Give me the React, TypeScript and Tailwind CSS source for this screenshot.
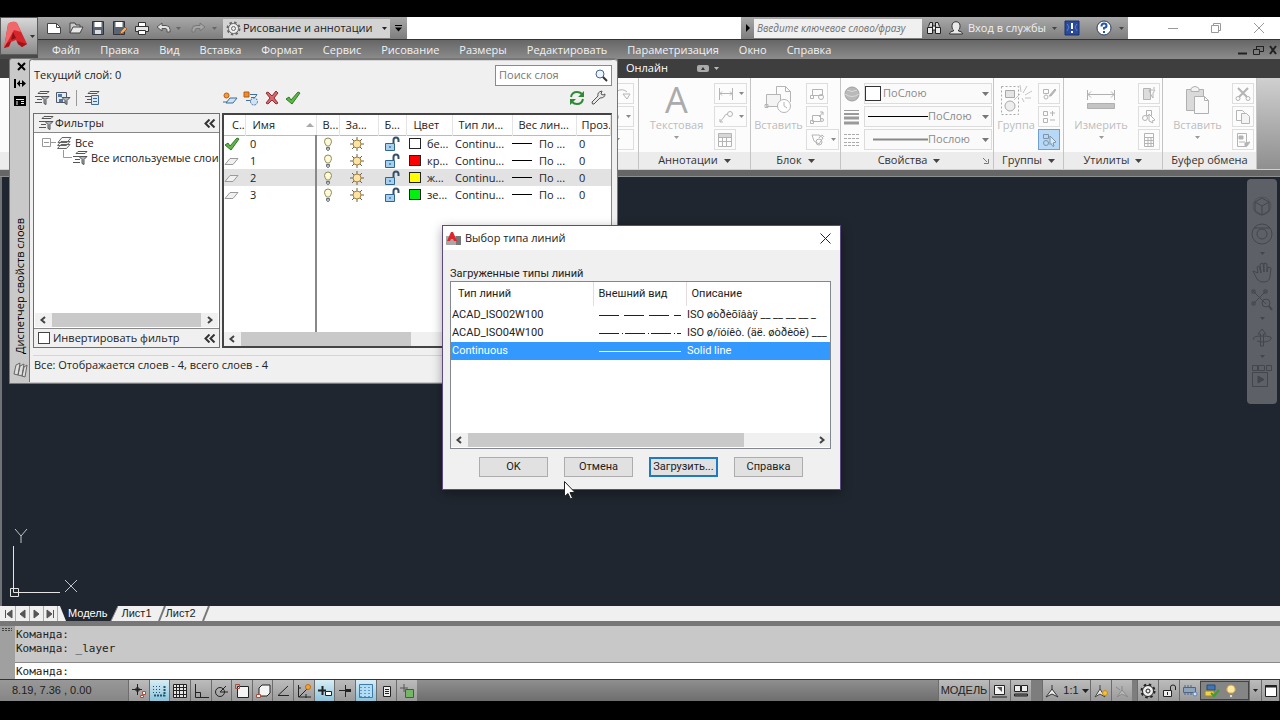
import type { ReactNode } from "react";
import clsx from "clsx";

const MENU = [
  "Файл", "Правка", "Вид", "Вставка", "Формат", "Сервис", "Рисование",
  "Размеры", "Редактировать", "Параметризация", "Окно", "Справка",
];

const LAYERS = [
  { name: "0", current: true, fill: "bg-white", color: "бе..." },
  { name: "1", fill: "bg-[#ff0000]", color: "кр..." },
  { name: "2", selected: true, fill: "bg-[#ffff00]", color: "ж..." },
  { name: "3", fill: "bg-[#00f010]", color: "зе..." },
];

const LINETYPES = [
  { name: "ACAD_ISO02W100", dash: "20 5", note: "ISO øòðèõîâàÿ __ __ __ __ _" },
  { name: "ACAD_ISO04W100", dash: "20 3 1 2", note: "ISO ø/ïóíêò. (äë. øòðèõè) ___" },
  { name: "Continuous", dash: "", note: "Solid line", selected: true },
];

type DrawingProps = { w?: number; h?: number; className?: string; children: ReactNode };

function Drawing({ w = 16, h = 16, className, children }: DrawingProps) {
  return (
    <svg
      width={w}
      height={h}
      viewBox={`0 0 ${w} ${h}`}
      fill="none"
      stroke="currentColor"
      aria-hidden="true"
      className={clsx("shrink-0", className)}
    >
      {children}
    </svg>
  );
}

function Caret({ className }: { className?: string }) {
  return (
    <Drawing w={7} h={4} className={className}>
      <path d="M0 0h7L3.5 4z" fill="currentColor" stroke="none" />
    </Drawing>
  );
}

function SmallCaret({ className }: { className?: string }) {
  return (
    <Drawing w={5} h={3} className={className}>
      <path d="M0 0h5L2.500 3z" fill="currentColor" stroke="none" />
    </Drawing>
  );
}

/* ---------- title bar ---------- */

function AppButton() {
  return (
    <button
      aria-label="Меню приложения"
      className="flex h-[38px] w-[38px] shrink-0 items-center gap-px border border-[#5a5a5a] bg-gradient-to-b from-[#d8d8d8] to-[#8b8b8b] pl-[2px] text-[#333]"
    >
      <Drawing w={26} h={34}>
        <path d="M5 5q5-4 9-1l10 21-5 3-4-3-2-4-5 2-2 5-5 1z" fill="#d5262c" stroke="none" />
        <path d="M5 5q5-4 9-1l4 9-7-2-5 9-5 9z" fill="#f0686a" stroke="none" />
        <path d="m10 13 3 6-5 2z" fill="#8d1217" stroke="none" />
        <path d="M1 29 6 27l2-5-4 2zM14 22l10 3-5 3-4-3z" fill="#a3141a" stroke="none" />
      </Drawing>
      <SmallCaret />
    </button>
  );
}

function QuickAccess() {
  return (
    <div className="flex h-full w-[369px] shrink-0 items-center bg-gradient-to-b from-[#a9a9a9] to-[#7d7d7d] pl-2 text-[#333]">
      <div className="flex items-center gap-[6px]">
        <button aria-label="Создать">
          <Drawing><path d="M1.500 3.500h9l4 4v6h-13z" fill="#fff" stroke="#444" /><path d="M10.500 3.500v4h4" stroke="#444" /></Drawing>
        </button>
        <button aria-label="Открыть">
          <Drawing><path d="M2 13V3h5l1 2h4v2" fill="#ccc" stroke="#444" /><path d="m2 13 3-6h10l-3 6z" fill="#e8e8e8" stroke="#444" /></Drawing>
        </button>
        <button aria-label="Сохранить">
          <Drawing><path d="M2.500 1.500h11v13h-11z" fill="#5b6472" stroke="#2d3440" /><path d="M4.500 2h7v5h-7z" fill="#fff" stroke="none" /><path d="M5 10h6v4H5z" fill="#ddd" stroke="none" /></Drawing>
        </button>
        <button aria-label="Сохранить как">
          <Drawing><path d="M1.500 1.500h11v13h-11z" fill="#5b6472" stroke="#2d3440" /><path d="M3.500 2h7v5h-7z" fill="#fff" stroke="none" /><path d="m8 14 1-3 4-4 2 2-4 4z" fill="#e8b070" stroke="#a45a20" /></Drawing>
        </button>
        <button aria-label="Печать">
          <Drawing><path d="M4.500 6V2.500h7V6" fill="#fff" stroke="#333" /><path d="M1.500 6.500h13v5h-13z" fill="#e5e5e5" stroke="#333" /><path d="M4.500 10.500h7v4h-7z" fill="#fff" stroke="#333" /></Drawing>
        </button>
        <button aria-label="Отменить">
          <Drawing><path d="m1 7 5-4v2.500h4q4 0 4 4V12h-3v-2q0-1.500-2-1.500H6V11z" fill="#e4e4e4" stroke="#555" /></Drawing>
        </button>
      </div>
      <SmallCaret className="mx-1 text-[#666]" />
      <button aria-label="Повторить" className="ml-[5px]">
        <Drawing><path d="m15 7-5-4v2.500H6q-4 0-4 4V12h3v-2q0-1.500 2-1.500h3V11z" fill="#a5a5a5" stroke="#777" /></Drawing>
      </button>
      <SmallCaret className="mx-[6px] text-[#666]" />
      <div className="flex h-[19px] w-[167px] items-center bg-[#d3d3d3] pl-[3px] text-[#222]">
        <Drawing w={15} h={15}>
          <circle cx="7.500" cy="7.500" r="6" stroke="#666" strokeWidth="2" strokeDasharray="2.400 2.300" />
          <circle cx="7.500" cy="7.500" r="5" stroke="#666" fill="#eee" />
          <circle cx="7.500" cy="7.500" r="2" stroke="#666" />
        </Drawing>
        <select aria-label="Рабочее пространство" className="min-w-0 flex-1 appearance-none bg-transparent pl-[2px] text-[11px] outline-none">
          <option>Рисование и аннотации</option>
        </select>
        <SmallCaret className="mr-[3px]" />
      </div>
      <button aria-label="Настройка панели" className="ml-[5px] text-black">
        <Drawing w={7} h={7}><path d="M0 .5h7" /><path d="M0 2.500h7L3.500 6.500z" fill="currentColor" stroke="none" /></Drawing>
      </button>
    </div>
  );
}

function InfoCenter() {
  return (
    <div className="flex h-full w-[387px] shrink-0 items-center bg-gradient-to-b from-[#a9a9a9] to-[#7d7d7d]">
      <button aria-label="Свернуть поиск" className="flex w-[13px] justify-center text-black">
        <Drawing w={4} h={8}><path d="M0 0v8l4-4z" fill="currentColor" stroke="none" /></Drawing>
      </button>
      <input
        aria-label="Поиск по справке"
        placeholder="Введите ключевое слово/фразу"
        className="h-[19px] w-[168px] bg-[#f0f0f0] px-[3px] text-[10px] italic outline-none placeholder:text-[#6f6f6f]"
      />
      <button aria-label="Найти" className="ml-1">
        <Drawing>
          <path d="M2.500 6.500 4 2.500h2.500v4m3 0v-4H12l1.500 4" fill="#ddd" stroke="#222" />
          <path d="M1.500 7.500h5v6h-5zm8 0h5v6h-5zM6.500 6h3v4h-3z" fill="#eee" stroke="#222" />
        </Drawing>
      </button>
      <button className="ml-[6px] flex items-center gap-1 text-[11px] text-[#f0f0f0]">
        <Drawing><path d="M1.500 14c0-2 2-2.500 4-3v-1C4 9 4 7.500 4 5.500c0-5 8-5 8 0 0 2 0 3.500-1.500 4.500v1c2 .5 4 1 4 3z" fill="#eaeaea" stroke="#333" /></Drawing>
        <span>Вход в службы</span>
      </button>
      <SmallCaret className="ml-[6px] text-[#444]" />
      <button aria-label="Exchange" className="ml-[7px]">
        <Drawing><path d="M1 1h14v14H1z" fill="#2b4a9b" stroke="#18306e" /><path d="M8 3v6m0 2v2" stroke="#fff" strokeWidth="2" /><path d="m3 4 2 3-2 4m10-7-2 3 2 4" stroke="#5f7fc8" /></Drawing>
      </button>
      <button aria-label="Справка AutoCAD" className="ml-[16px]">
        <Drawing><circle cx="8" cy="8" r="7" fill="#fff" stroke="#2b3b66" /><path d="M5.500 6.500q0-3 2.500-3t2.500 2.200Q10.500 7.500 8 8v1.500M8 11v2" stroke="#2456ad" strokeWidth="2" /></Drawing>
      </button>
      <SmallCaret className="ml-[7px] text-[#444]" />
    </div>
  );
}

function Header() {
  return (
    <header className="flex h-[42px] bg-[#4a4a4a]">
      <AppButton />
      <div className="flex min-w-0 flex-1 flex-col">
        <div className="flex h-[22px] bg-white">
          <QuickAccess />
          <div className="flex-1" />
          <InfoCenter />
          <div className="flex w-[152px] shrink-0 items-center justify-end gap-[33px] pr-[16px] text-[#999]">
            <button aria-label="Свернуть"><Drawing w={10} h={10}><path d="M0 5.500h10" /></Drawing></button>
            <button aria-label="Развернуть"><Drawing w={10} h={10}><path d="M.5 2.500h7v7h-7zM2.500 2V.5h7v7H8" /></Drawing></button>
            <button aria-label="Закрыть"><Drawing w={10} h={10}><path d="m0 0 10 10M10 0 0 10" /></Drawing></button>
          </div>
        </div>
        <div className="flex flex-1 items-center border-t border-[#333] bg-gradient-to-b from-[#666] to-[#8c8c8c] pl-[14px]">
          <nav className="flex gap-[20px] text-[11px] leading-4 text-[#f2f2f2]">
            {MENU.map((item) => (
              <a key={item} href="#" className="whitespace-nowrap">{item}</a>
            ))}
          </nav>
          <div className="ml-auto flex items-center gap-[5px] pr-[3px] text-[#222]">
            <Drawing w={10} h={10}><path d="M0 8.500h9" strokeWidth="2" /></Drawing>
            <Drawing w={11} h={10}><path d="M.5 4.500h6v5h-6zM3.500 4V1.500h7v5H7M3 1.500h8" /></Drawing>
            <Drawing w={8} h={10}><path d="m1 1 6 8m0-8L1 9" strokeWidth="2" /></Drawing>
          </div>
        </div>
      </div>
    </header>
  );
}

/* ---------- ribbon ---------- */

type PanelProps = { title: string; className: string; arrow?: boolean; launcher?: boolean; children: ReactNode };

function Panel({ title, className, arrow = true, launcher, children }: PanelProps) {
  return (
    <section className={clsx("flex shrink-0 flex-col border-r border-[#c4c4c4]", className)}>
      <div className="flex flex-1 bg-[#fcfcfc] pt-[5px]">{children}</div>
      <h2 className="flex h-[17px] items-center justify-center gap-[6px] bg-[#ececec] text-[11px] text-[#333]">
        <span className={clsx(launcher && "ml-auto")}>{title}</span>
        {arrow && <Caret className="text-[#444]" />}
        {launcher && (
          <Drawing w={6} h={6} className="ml-auto mr-1 text-[#777]"><path d="m0 0 4 4M5.500 1v4.500H1" /></Drawing>
        )}
      </h2>
    </section>
  );
}

function Tool({ label, active, wide, children }: { label: string; active?: boolean; wide?: boolean; children: ReactNode }) {
  return (
    <button
      aria-label={label}
      className={clsx(
        "flex h-[21px] items-center justify-center border",
        wide ? "w-[33px] gap-[5px]" : "w-[22px]",
        active ? "border-[#6fa0d0] bg-[#b7d8f7] text-[#7d93a8]" : "border-[#dedede] text-[#b4b4b4]",
      )}
    >
      {children}
      {wide && <SmallCaret className="text-[#888]" />}
    </button>
  );
}

function BigTool({ label, caret, className, children }: { label: string; caret?: boolean; className: string; children: ReactNode }) {
  return (
    <button className={clsx("flex flex-col items-center text-[11px] text-[#bcbcbc]", className)}>
      <span className="flex h-[34px] items-center">{children}</span>
      <span className="leading-4">{label}</span>
      {caret && <SmallCaret className="mt-[3px] text-[#999]" />}
    </button>
  );
}

function PropertyRow({ icon, sample, value, label }: { icon: ReactNode; sample: ReactNode; value: string; label: string }) {
  return (
    <div className="flex h-[21px] items-center gap-1">
      {icon}
      <label className="flex h-[21px] w-[128px] items-center border border-[#dcdcdc] bg-[#fafafa]">
        {sample}
        <select aria-label={label} className="min-w-0 flex-1 appearance-none bg-transparent text-[11px] text-[#8a8a8a] outline-none">
          <option>{value}</option>
        </select>
        <Caret className="mr-[2px] text-[#777]" />
      </label>
    </div>
  );
}

function Ribbon() {
  return (
    <div className="bg-[#3e3e3e]">
      <div className="flex h-[19px] items-center pl-[626px] text-[11px] text-white">
        <button>Онлайн</button>
        <button aria-label="Свернуть ленту" className="ml-[29px] flex items-center gap-[5px] text-[#bbb]">
          <Drawing w={12} h={8}><rect width="12" height="7" rx="2" fill="#aaa" stroke="none" /><path d="M4 5h4L6 2z" fill="#333" stroke="none" /></Drawing>
          <SmallCaret />
        </button>
      </div>
      <div className="flex h-[92px] border-b border-[#d0d0d0] bg-gradient-to-b from-[#d0d0d0] to-[#8f8f8f]">
        <section className="flex w-[639px] shrink-0 flex-col border-r border-[#c4c4c4]">
          <div className="flex flex-1 flex-col items-end gap-[2px] bg-[#fcfcfc] pr-[4px] pt-[5px]">
            <Tool label="Дуга"><Drawing><path d="M2 5q6-3 10 1m-4 2h7l-3 5z" /></Drawing></Tool>
            <Tool label="Круг" wide><Drawing><circle cx="11" cy="8" r="2.500" /></Drawing></Tool>
            <Tool label="Массив" wide>{null}</Tool>
          </div>
          <div className="h-[17px] bg-[#ececec]" />
        </section>

        <Panel title="Аннотации" className="w-[112px]">
          <BigTool label="Текстовая" caret className="w-[75px]">
            <span className="text-[36px] leading-[34px] text-[#ababab]">A</span>
          </BigTool>
          <div className="flex flex-col gap-[2px]">
            <Tool label="Размер" wide><Drawing><path d="M1.500 2v12m13-12v12M2 7.500h12m-10-2-2 2 2 2m8-4 2 2-2 2" /></Drawing></Tool>
            <Tool label="Выноска" wide><Drawing><circle cx="12" cy="5" r="2.500" /><path d="M9.500 5Q7 5 6 8l-4 5m0-3v3h3" /></Drawing></Tool>
            <Tool label="Таблица"><Drawing><path d="M1.500 1.500h13v13h-13zM1.500 5.500h13m-13 4h13m-9-4v9m4-9v9" /><path d="M2 2h12v3H2z" fill="currentColor" opacity=".5" /></Drawing></Tool>
          </div>
        </Panel>

        <Panel title="Блок" className="w-[90px]">
          <BigTool label="Вставить" className="w-[55px]">
            <Drawing w={30} h={30} className="text-[#b5b5b5]">
              <path d="M12.500 12V1.500h9l5 5V17M21.500 1.500v5h5" />
              <path d="M2.500 9.500h14v12h-14z" fill="#f4f4f4" />
              <circle cx="20" cy="21" r="6.500" fill="#fff" /><path d="M20 17v4l3 2M1 19.500h3v3H1z" />
            </Drawing>
          </BigTool>
          <div className="flex flex-col gap-[2px]">
            <Tool label="Создать блок"><Drawing><path d="M3.500 3.500h10v6h-10zM1.500 9.500h3v3h-3z" /><circle cx="12" cy="11" r="2.500" /></Drawing></Tool>
            <Tool label="Редактор блоков"><Drawing><path d="M3.500 6.500h8v6h-8zM1.500 11.500h3v3h-3zM10 8l4-5m-3 0h3v3" /><circle cx="13" cy="11" r="1.500" /></Drawing></Tool>
            <Tool label="Атрибуты" wide><Drawing><path d="M2 3h7l4 3-4 6-5-3zM9 6q3-5 5-1" /><circle cx="9" cy="10" r="3" /></Drawing></Tool>
          </div>
        </Panel>

        <Panel title="Свойства" className="w-[153px]" launcher>
          <div className="flex flex-col gap-[2px] pl-[3px]">
            <PropertyRow
              label="Цвет объекта"
              value="ПоСлою"
              icon={<Drawing><circle cx="8" cy="8" r="7" fill="#b9b9b9" stroke="#a0a0a0" /><path d="M1 8q7 5 14 0M3 4q5 3 10 0" stroke="#dadada" /></Drawing>}
              sample={<span className="mr-[2px] h-[15px] w-[16px] shrink-0 border border-[#333] bg-white" />}
            />
            <PropertyRow
              label="Вес линий"
              value="ПоСлою"
              icon={<Drawing className="text-[#9a9a9a]"><path d="M0 1.500h15" /><path d="M0 5h15" strokeWidth="2" /><path d="M0 9h15M0 14h15" strokeWidth="3" /></Drawing>}
              sample={<Drawing w={63} h={3} className="text-black"><path d="M3 1.500h60" /></Drawing>}
            />
            <PropertyRow
              label="Тип линий"
              value="Послою"
              icon={<Drawing className="text-[#aaa]"><path d="M0 2.500h15M0 6.500h15M0 10.500h15M0 13.500h15" strokeDasharray="3 1" /></Drawing>}
              sample={<Drawing w={63} h={3} className="text-[#888]"><path d="M8 1.500h55" strokeWidth="2" /></Drawing>}
            />
          </div>
        </Panel>

        <Panel title="Группы" className="w-[70px]">
          <BigTool label="Группа" className="w-[44px]">
            <Drawing w={32} h={32} className="text-[#a9a9a9]">
              <path d="M1.500 2.500h17v28h-17z" strokeDasharray="2 2" />
              <path d="M5.500 6.500h9v7h-9z" fill="#e4e4e4" /><circle cx="10" cy="22" r="5" fill="#eee" />
              <path d="m14 16 6-6M20 1l1 7m6-6-4 7m9-2-7 4m6 3h-6m-3 0 2 4" stroke="#c4c4c4" />
            </Drawing>
          </BigTool>
          <div className="flex flex-col gap-[2px]">
            <Tool label="Редактировать группу"><Drawing><path d="M2.500 3.500h5v4h-5z" /><circle cx="5" cy="11" r="2" /><path d="m8 10 6-7 1 1-5 6z" fill="currentColor" /></Drawing></Tool>
            <Tool label="Добавить в группу"><Drawing><path d="M2.500 2.500h4v4h-4zM2.500 9.500h4v4h-4zM9 4h5m-2.500-2v5M9 11h5" /></Drawing></Tool>
            <Tool label="Выбор группы" active><Drawing><path d="M2.500 2.500h5v4h-5z" /><circle cx="5" cy="11" r="2.500" /><path d="m9 4 6 6-3 1 1 3-1 .5-2-3-1 1z" fill="#d9ebfb" /></Drawing></Tool>
          </div>
        </Panel>

        <Panel title="Утилиты" className="w-[99px]">
          <BigTool label="Измерить" caret className="w-[74px]">
            <Drawing w={28} h={22} className="text-[#b0b0b0]">
              <path d="M.5 1v10m27-10v10M1 5.500h26m-23-3-3 3 3 3m20-6 3 3-3 3" />
              <path d="M.5 14.500h27v5H.5z" fill="#c4c4c4" />
            </Drawing>
          </BigTool>
          <div className="flex flex-col gap-[2px]">
            <Tool label="Быстрый выбор"><Drawing><path d="M2.500 2.500h7v11h-7z" fill="#ddd" /><path d="M8 4h6l-2 3v5l-2-3zM13 1v2" /></Drawing></Tool>
            <Tool label="Выбрать подобные"><Drawing><path d="M5.500 1.500h5v5h-5z" /><circle cx="4" cy="9" r="2.500" /><path d="m8 5 6 6-3 1 1 2-4-2z" fill="#fff" /></Drawing></Tool>
            <Tool label="Калькулятор"><Drawing><path d="M3.500 1.500h9v13h-9zM4 5.500h8M4 8.500h8m-8 3h8m-5-6v9m3-9v9" /></Drawing></Tool>
          </div>
        </Panel>

        <Panel title="Буфер обмена" className="w-[94px]" arrow={false}>
          <BigTool label="Вставить" caret className="w-[69px]">
            <Drawing w={26} h={30} className="text-[#b0b0b0]">
              <path d="M1.500 4.500h17v21h-17z" fill="#dadada" /><path d="M6 3.500q4-4 8 0v3H6z" fill="#f3f3f3" />
              <path d="M9.500 11.500h10l4 4v13h-14zM19.500 11.500v4h4" fill="#fafafa" />
            </Drawing>
          </BigTool>
          <div className="flex flex-col gap-[2px]">
            <Tool label="Вырезать"><Drawing><path d="m3 2 9 9M13 2l-9 9" strokeWidth="2" /><circle cx="3" cy="12.500" r="2" /><circle cx="13" cy="12.500" r="2" /></Drawing></Tool>
            <Tool label="Копировать"><Drawing><path d="M1.500 1.500h6l2 2v8h-8z" /><path d="M6.500 4.500h5l3 3v7h-8z" fill="#f4f4f4" /></Drawing></Tool>
            <Tool label="Копировать свойства"><Drawing><path d="M2.500 1.500h9v13h-9z" /><path d="M4 4h4v3H4zM4 10h6m0 1 5-1-3 4h-2z" fill="currentColor" /></Drawing></Tool>
          </div>
        </Panel>
      </div>
      <div className="h-[7px] border-b border-[#8d908e] bg-[#666]" />
    </div>
  );
}

/* ---------- drawing area ---------- */

function NavigationBar() {
  return (
    <div className="absolute right-[3px] top-[2px] flex h-[225px] w-[30px] flex-col items-center justify-between rounded-[4px] bg-[#5d6067] pb-[16px] pt-[16px] text-[#42464d]">
      <Drawing w={22} h={22}><circle cx="11" cy="11" r="9" opacity=".5" /><path d="m4 7 7-4 7 4v9l-7 4-7-4zM4 7l7 4 7-4m-7 4v9" /></Drawing>
      <Drawing w={22} h={22}><circle cx="11" cy="11" r="10" /><circle cx="11" cy="11" r="5" /><path d="M3 5h16" /></Drawing>
      <SmallCaret />
      <Drawing w={22} h={22}><path d="m7 12-5-2 4 8q3 4 8 3 5-1 5-6l1-8-3-1-1 5V3l-3-1v9l-1-9-3 1 1 9-2-7-2 1z" /></Drawing>
      <Drawing w={22} h={22}><path d="M2 2 15 15M15 2 2 15M1 1h3v3H1zm12 0h3v3h-3zM1 13h3v3H1z" /><circle cx="15" cy="14" r="4" /><path d="m18 17 3 4" strokeWidth="2" /></Drawing>
      <SmallCaret />
      <Drawing w={22} h={22}><path d="M9.500 19V7L7 7l4-5 4 5h-2.500v12z" /><path d="M3 13q-3-4 8-4t9 3-9 3l-5-1" /></Drawing>
      <SmallCaret />
      <Drawing w={22} h={24}><path d="M1.500 1.500h5v5h-5zm6 0h6v5h-6zm8 0h5v5h-5zM1.500 8.500h15v14h-15z" /><path d="M7 12v7l6-3.500z" fill="currentColor" /></Drawing>
    </div>
  );
}

function DrawingArea() {
  return (
    <main className="relative h-[429px] border-l-2 border-[#6f7376] bg-[#20262f]">
      <NavigationBar />
      <Drawing w={80} h={80} className="absolute bottom-[4px] left-[6px] text-[#e4e4e4]">
        <path d="M5.500 24v44M10 70.500h42M2.500 66.500h8v8h-8zM5.500 68v2.500H10" />
        <path d="M7 7l6 7 6-7m-6 7v7M57 58l12 12m0-12-12 12" stroke="#c0c4c8" />
      </Drawing>
    </main>
  );
}

/* ---------- layer palette ---------- */

function ScrollBar({ thumb }: { thumb: string }) {
  return (
    <div aria-hidden="true" className="flex h-[14px] items-center bg-[#f0f0f0] text-[#444]">
      <Drawing w={17} h={8}><path d="m10 1-3.500 3L10 7" strokeWidth="2" /></Drawing>
      <div className="flex h-full flex-1"><div className={clsx("h-full bg-[#c9c9c9]", thumb)} /></div>
      <Drawing w={17} h={8}><path d="m7 1 3.500 3L7 7" strokeWidth="2" /></Drawing>
    </div>
  );
}

function Collapse() {
  return (
    <button aria-label="Свернуть" className="ml-auto text-[#333]">
      <Drawing w={12} h={9}><path d="M5.500.5 1.500 4.500l4 4m5-8-4 4 4 4" strokeWidth="2" /></Drawing>
    </button>
  );
}

function FilterIcon() {
  return (
    <Drawing className="text-[#555]">
      <path d="M4 3.500h9l2-2H6zM1 6.500h6M3 9.500h5M1 12.500h7" />
      <path d="M7 6.500h8l-3 3v5l-2-1v-4z" fill="#a9b2bb" />
    </Drawing>
  );
}

function StackIcon() {
  return (
    <Drawing className="text-[#666]">
      <path d="M1.500 13.500 5 9.500h9l-3.500 4zM1.500 10.500 5 6.500h9l-3.500 4zM2 7.500l4-5h9l-4 5z" fill="#f8f8f8" />
    </Drawing>
  );
}

function Check() {
  return <Drawing><path d="m1 9 3-2 2 3 7-8 2 1-8 11z" fill="#5fb548" stroke="#2e7a24" /></Drawing>;
}

function Bulb() {
  return (
    <Drawing w={10}>
      <path d="M3.500 10Q1.500 7 1.500 5.500q0-3.500 3.500-3.500t3.500 3.500Q8.500 7 6.500 10z" fill="#fdfbd6" stroke="#8b8a5c" />
      <path d="M3.500 11.500h3v2l-1 1h-1l-1-1z" fill="#b5b9c5" stroke="#6b7078" />
    </Drawing>
  );
}

function Sun() {
  return (
    <Drawing>
      <path d="M8 1v14M1 8h14M3 3l10 10M13 3 3 13" stroke="#6d624a" />
      <circle cx="8" cy="8" r="4" fill="#fbe3a6" stroke="#a5813d" />
    </Drawing>
  );
}

function Lock() {
  return (
    <Drawing>
      <path d="M9.500 7V4q0-2.500 2.500-2.500T14.500 4v2" stroke="#34506b" strokeWidth="2" />
      <path d="M1.500 7.500h9v7h-9z" fill="#a7d0ee" stroke="#2e6693" /><path d="M6 10v2" stroke="#1f4a70" />
    </Drawing>
  );
}

function FilterTree() {
  return (
    <div className="flex w-[187px] shrink-0 flex-col border border-[#6f6f6f]">
      <div className="flex h-[19px] items-center gap-px border-b border-[#888] pl-1 pr-[3px]">
        <FilterIcon />
        <span className="text-[11px]">Фильтры</span>
        <Collapse />
      </div>
      <div className="flex flex-1 flex-col overflow-hidden bg-white pt-[2px] text-[11px] leading-[15px]">
        <div className="flex h-[15px] items-center pl-[8px]">
          <Drawing w={14} h={9} className="text-[#999]"><path d="M.5.5h8v8h-8zM2 4.500h5m2 0h5" /></Drawing>
          <StackIcon />
          <span className="ml-[3px]">Все</span>
        </div>
        <div className="flex h-[15px] items-center whitespace-nowrap pl-[29px]">
          <Drawing w={9} h={15} className="text-[#999]"><path d="M.5 0v7.500H9" /></Drawing>
          <FilterIcon />
          <span className="ml-[3px]">Все используемые слои</span>
        </div>
        <div className="mt-auto px-px pb-px"><ScrollBar thumb="w-full" /></div>
      </div>
      <div className="flex h-[19px] items-center border-t border-[#888] pl-1 pr-[3px]">
        <label className="flex items-center gap-[3px] text-[11px]">
          <input type="checkbox" className="h-[12px] w-[12px] appearance-none border border-[#444] bg-white" />
          Инвертировать фильтр
        </label>
        <Collapse />
      </div>
    </div>
  );
}

function LayerTable() {
  return (
    <div className="flex min-w-0 flex-1 flex-col overflow-hidden border-2 border-r border-[#444] border-r-[#888] bg-white">
      <div className="h-[217px]">
        <table className="h-full w-full table-fixed border-collapse text-left text-[11px] leading-[16px]">
          <colgroup>
            <col className="w-[21px]" />
            <col className="w-[71px]" />
            <col className="w-[23px]" />
            <col className="w-[39px]" />
            <col className="w-[28px]" />
            <col className="w-[46px]" />
            <col className="w-[60px]" />
            <col className="w-[64px]" />
            <col />
          </colgroup>
          <thead>
            <tr className="h-[20px] whitespace-nowrap border-b border-[#bbb] [&>th]:overflow-hidden [&>th]:border-r [&>th]:border-[#e4e4e4] [&>th]:p-0 [&>th]:font-normal">
              <th><span className="pl-2">С..</span></th>
              <th>
                <span className="flex items-center justify-between pl-[7px] pr-[2px]">
                  Имя
                  <Drawing w={8} h={4} className="text-[#aaa]"><path d="M0 4h8L4 0z" fill="currentColor" stroke="none" /></Drawing>
                </span>
              </th>
              <th className="pl-[6px]!">В...</th>
              <th className="pl-[6px]!">За...</th>
              <th className="pl-[6px]!">Б...</th>
              <th className="pl-[7px]!">Цвет</th>
              <th className="pl-[6px]!">Тип ли...</th>
              <th className="pl-[6px]!">Вес лин...</th>
              <th className="pl-[5px]!">Проз.</th>
            </tr>
          </thead>
          <tbody>
            {LAYERS.map((layer) => (
              <tr
                key={layer.name}
                className={clsx("h-[17px] whitespace-nowrap [&>td]:overflow-hidden [&>td]:p-0", layer.selected && "bg-[#e2e2e2]")}
              >
                <td>
                  {layer.current ? (
                    <Check />
                  ) : (
                    <Drawing><path d="M1 11.500 6 5.500h8l-5 6z" fill="#f0f0f0" stroke="#9a9a9a" /></Drawing>
                  )}
                </td>
                <td className="border-r-2 border-[#888] pl-[5px]!">{layer.name}</td>
                <td className="pl-[6px]!"><Bulb /></td>
                <td className="pl-[10px]!"><Sun /></td>
                <td className="pl-[6px]!"><Lock /></td>
                <td className="pl-[3px]!">
                  <span className="flex items-center gap-[6px]">
                    <span className={clsx("h-[11px] w-[12px] shrink-0 border border-[#222]", layer.fill)} />
                    {layer.color}
                  </span>
                </td>
                <td className="pl-[3px]!">Continu...</td>
                <td>
                  <span className="flex items-center gap-[7px]">
                    <span className="h-px w-[20px] shrink-0 bg-black" />
                    По ...
                  </span>
                </td>
                <td className="pl-[3px]!">0</td>
              </tr>
            ))}
            {/* empty space below the last layer keeps the frozen-column divider */}
            <tr>
              <td />
              <td className="border-r-2 border-[#888]" />
              <td colSpan={7} />
            </tr>
          </tbody>
        </table>
      </div>
      <ScrollBar thumb="w-[170px]" />
    </div>
  );
}

function LayerPalette() {
  return (
    <section className="absolute left-[9px] top-[58px] flex h-[326px] w-[609px] rounded-t-[3px] border border-[#777] bg-[#c9c9c9] pb-px text-[#222]">
      <div className="flex w-[19px] shrink-0 flex-col items-center gap-[8px] pb-1 pt-[3px] text-black">
        <button aria-label="Закрыть палитру" className="ml-[3px]"><Drawing w={9} h={9}><path d="m1 1 7 7m0-7L1 8" strokeWidth="2" /></Drawing></button>
        <button aria-label="Автоматически скрывать"><Drawing w={12} h={9}><path d="M1 0v9" strokeWidth="2" /><path d="M6 1v7L3 4.500zM8 1v7l4-3.500z" fill="currentColor" stroke="none" /><path d="M3 4.500h8" /></Drawing></button>
        <button aria-label="Свойства палитры"><Drawing w={12} h={10}><path d="M0 0h12v10H0z" fill="currentColor" stroke="none" /><path d="M2 3.500h8M7 5.500h3m-3 2h3M3 5v4" stroke="#eee" /></Drawing></button>
        <span className="mt-auto rotate-180 whitespace-nowrap text-[11px] leading-4 [writing-mode:vertical-rl]">Диспетчер свойств слоев</span>
        <Drawing><path d="m2 12 2-9 4-2-2 12zM6 13l2-9 4-2-2 12zM10 14l2-9 3-2-2 12z" fill="#ddd" stroke="#666" /></Drawing>
      </div>

      <div className="flex min-w-0 flex-1 flex-col rounded-t-[3px] border-l border-t border-[#777] bg-[#f0f0f0] pl-[3px] pr-[5px]">
        <div className="flex h-[30px] items-center border-t border-[#d5d5d5] pl-px">
          <span className="text-[11px]">Текущий слой: 0</span>
          <label className="ml-auto flex h-[21px] w-[117px] items-center border border-[#8a8a8a] bg-white pr-[3px]">
            <input aria-label="Поиск слоя" placeholder="Поиск слоя" className="min-w-0 flex-1 bg-transparent pl-[3px] text-[11px] outline-none placeholder:text-[#777]" />
            <Drawing w={13} h={13}><circle cx="5" cy="5" r="4" stroke="#45688e" fill="#eef4fa" /><path d="m8 8 4 4" stroke="#333" strokeWidth="2" /></Drawing>
          </label>
        </div>
        <div className="flex h-[23px] shrink-0 items-start">
          <div className="flex w-[189px] items-center gap-[5px] pl-px">
            <button aria-label="Новый фильтр"><FilterIcon /></button>
            <button aria-label="Новый фильтр группы">
              <Drawing><path d="M1.500 2.500h10v10h-10z" fill="#e3ebf3" stroke="#556" /><path d="M3 4h4v3H3zM4 9h4v3H4z" fill="#4c78a8" stroke="none" /><path d="M7 7.500h8l-3 3v4l-2-1v-3z" fill="#a9b2bb" stroke="#555" /></Drawing>
            </button>
            <span className="h-[16px] w-px bg-[#999]" />
            <button aria-label="Диспетчер состояний слоев" className="ml-[2px]">
              <Drawing><path d="M4 3.500h9l2-2H6zM1 6.500h6M3 9.500h5M1 12.500h7" stroke="#555" /><path d="M7.500 5.500h7v9h-7z" fill="#dce9f5" stroke="#3f6a94" /><path d="M9 8.500h4m-4 3h4" stroke="#3f6a94" /></Drawing>
            </button>
          </div>
          <div className="flex items-center gap-[5px]">
            <button aria-label="Создать слой">
              <Drawing><path d="m4 13 4-5h7l-4 5z" fill="#cfe3f5" stroke="#3d6f9f" /><path d="M1 12h4" stroke="#3d6f9f" /><circle cx="4.500" cy="5.500" r="2.500" fill="#f79a3a" stroke="#b85c10" /></Drawing>
            </button>
            <button aria-label="Новый слой, замороженный на ВЭ">
              <Drawing><path d="M1 2h5v5H1z" fill="#f08a2c" stroke="#b85c10" /><path d="M7 4.500h7l-2 3H8M3 10.500h5" stroke="#3d6f9f" /><circle cx="11" cy="11.500" r="3.500" fill="#cfe3f5" stroke="#3d6f9f" strokeDasharray="2 1" /></Drawing>
            </button>
            <button aria-label="Удалить слой">
              <Drawing><path d="m2 3 2-1 4 4 4-5 2 2-4 5 4 5-2 1-4-4-4 4-2-1 4-5z" fill="#d9676b" stroke="#8e2f33" /></Drawing>
            </button>
            <button aria-label="Установить текущим"><Check /></button>
          </div>
          <div className="ml-auto flex items-center gap-[5px] pr-[6px]">
            <button aria-label="Обновить">
              <Drawing><path d="M2 7q1-5 6-5 3 0 5 2M14 9q-1 5-6 5-3 0-5-2" stroke="#2f8a34" strokeWidth="2" /><path d="M15 1v6H9zM1 15V9h6z" fill="#2f8a34" stroke="none" /></Drawing>
            </button>
            <button aria-label="Параметры">
              <Drawing><path d="m2 12 6-6q-1-4 4-5l-1 3 2 1 2-1q0 4-5 4l-6 6q-2 1-2-2z" fill="#e8e8e8" stroke="#555" /></Drawing>
            </button>
          </div>
        </div>
        <div className="flex h-[235px] shrink-0 gap-[2px]">
          <FilterTree />
          <LayerTable />
        </div>
        <p className="mt-[7px] flex flex-1 items-center border-t border-[#d5d5d5] pb-[7px] pl-px text-[11px]">
          Все: Отображается слоев - 4, всего слоев - 4
        </p>
      </div>
    </section>
  );
}

/* ---------- linetype dialog ---------- */

function DialogButton({ focused, children }: { focused?: boolean; children: ReactNode }) {
  return (
    <button
      className={clsx(
        "h-[20px] w-[69px] bg-[#e1e1e1] leading-4",
        focused ? "border-2 border-[#1d78c8]" : "border border-[#adadad]",
      )}
    >
      {children}
    </button>
  );
}

function LinetypeDialog() {
  return (
    <section
      role="dialog"
      aria-labelledby="linetype-title"
      className="absolute left-[442px] top-[225px] flex h-[265px] w-[399px] flex-col border border-[#5b4a86] bg-[#f0f0f0] font-['Roboto','Liberation_Sans',sans-serif] text-[11px] text-[#222] shadow-[0_3px_10px_rgba(0,0,0,0.35)]"
    >
      <div className="flex h-[24px] shrink-0 items-center bg-white pl-[3px] pr-[9px]">
        <Drawing w={15} h={15}>
          <path d="M0 5h15v9H0z" fill="#a8a8a8" stroke="none" /><path d="M10 5h5v9h-5z" fill="#777" stroke="none" />
          <path d="M1 10 5 1h2l4 9H8L7 8H5l-1 2z" fill="#e0242c" stroke="none" />
        </Drawing>
        <h2 id="linetype-title" className="ml-[4px] font-['Open_Sans','Noto_Sans',sans-serif] text-[11px]">Выбор типа линий</h2>
        <button aria-label="Закрыть" className="ml-auto"><Drawing w={11} h={11}><path d="m.5.5 10 10m0-10-10 10" /></Drawing></button>
      </div>
      <div className="flex flex-1 flex-col px-[7px] pb-[12px] pt-[16px]">
        <p className="h-[15px] leading-[15px]">Загруженные типы линий</p>
        <div className="flex h-[168px] w-[381px] flex-col overflow-hidden border border-[#828790] bg-white">
          <table className="w-full table-fixed border-collapse text-left">
            <colgroup>
              <col className="w-[142px]" />
              <col className="w-[93px]" />
              <col />
            </colgroup>
            <thead>
              <tr className="h-[24px] [&>th]:border-[#e4dcdc] [&>th]:p-0 [&>th]:font-normal">
                <th className="border-r pl-[7px]!">Тип линий</th>
                <th className="border-r pl-[5px]!">Внешний вид</th>
                <th className="pl-[5px]!">Описание</th>
              </tr>
            </thead>
            <tbody>
              {LINETYPES.map((line) => (
                <tr
                  key={line.name}
                  className={clsx("h-[18px] whitespace-nowrap [&>td]:overflow-hidden [&>td]:p-0", line.selected && "bg-[#3399ff] text-white")}
                >
                  <td className="pl-px!">{line.name}</td>
                  <td className="pl-[6px]!">
                    <Drawing w={82} h={3}><path d="M0 1.500h82" strokeDasharray={line.dash || undefined} /></Drawing>
                  </td>
                  <td className="pl-px!">{line.note}</td>
                </tr>
              ))}
            </tbody>
          </table>
          <div className="mt-auto pb-px"><ScrollBar thumb="w-[276px]" /></div>
        </div>
        <div className="mt-auto flex gap-[16px] pl-[29px]">
          <DialogButton>OK</DialogButton>
          <DialogButton>Отмена</DialogButton>
          <DialogButton focused>Загрузить...</DialogButton>
          <DialogButton>Справка</DialogButton>
        </div>
      </div>
    </section>
  );
}

/* ---------- bottom bars ---------- */

function LayoutTabs() {
  return (
    <div className="flex h-[15px] bg-[#f0f0f0] pl-[2px] font-['Liberation_Sans',Arial,sans-serif] text-[11px] leading-[15px] text-[#222]">
      <div className="flex text-[#555]">
        {["M2.500 1v8M9 1v8L4 5z", "M8 1v8L3 5z", "M3 1v8l5-4z", "M8.500 1v8M2 1v8l5-4z"].map((d) => (
          <button key={d} aria-label="Листать листы" className="flex w-[14px] items-center justify-center border-r border-[#aaa]">
            <Drawing w={11} h={10}><path d={d} fill="currentColor" /></Drawing>
          </button>
        ))}
      </div>
      <button className="flex text-white">
        <Drawing w={8} h={15}><path d="M2 0h6v15z" fill="#20262f" stroke="none" /></Drawing>
        <span className="bg-[#20262f] px-[2px]">Модель</span>
        <Drawing w={9} h={15}><path d="M0 0h9L2 15H0z" fill="#20262f" stroke="none" /><path d="m9 0-7 15" stroke="#888" /></Drawing>
      </button>
      <button className="flex pl-[3px]">Лист1<Drawing w={14} h={15}><path d="M13 0 7 15" stroke="#777" strokeWidth="2" /></Drawing></button>
      <button className="flex">Лист2<Drawing w={14} h={15}><path d="M13 0 7 15" stroke="#777" strokeWidth="2" /></Drawing></button>
    </div>
  );
}

function CommandLine() {
  return (
    <div className="flex border-t-[5px] border-[#777] bg-[#a0a0a0] font-['DejaVu_Sans_Mono',monospace] text-[11px] leading-[14px] text-[#222]">
      <Drawing w={15} h={10} className="text-[#444]"><path d="M2 2.500h10M2 4.500h10" strokeDasharray="2 1" /></Drawing>
      <div className="min-w-0 flex-1">
        <div className="h-[37px] border-b border-[#888] bg-[#c8c8c8] pl-px pt-[2px]">
          <p>Команда:</p>
          <p>Команда: _layer</p>
        </div>
        <label className="flex h-[16px] items-center bg-white pl-px pt-[2px]">
          Команда:
          <input className="min-w-0 flex-1 bg-transparent pl-1 outline-none" />
        </label>
      </div>
    </div>
  );
}

const MODES: { label: string; on?: boolean; art: ReactNode }[] = [
  { label: "Подразумеваемые зависимости", art: <><path d="M1 6.500h10M6.500 1v11" /><path d="M4 6.500h5M6.500 4v5" strokeWidth="2" /><path d="M11.500 8.500h3v3h-3zM9.500 12.500h3v2h-3z" stroke="#b04a3a" fill="#fff" /></> },
  { label: "Шаг", on: true, art: <><path d="M2 3.500h8M2 6.500h8M2 9.500h8" strokeDasharray="1 2" stroke="#1d5573" /><path d="M3 12.500h10.500V3" strokeDasharray="2 1" stroke="#1d5573" strokeWidth="2" /></> },
  { label: "Сетка", art: <><path d="M1.500 1.500h13v13h-13z" fill="#e6e6e6" /><path d="M4.500 1v14m3-14v14m4-14v14M1 4.500h14m-14 3h14m-14 4h14" /></> },
  { label: "Орто", art: <path d="M2.500 1v13.500H16M3 9.500h4.500V14" /> },
  { label: "Полярное отслеживание", art: <><circle cx="7" cy="9" r="4.500" /><path d="M7 9h8M7 9l6-6" /></> },
  { label: "Привязка", art: <><path d="M3.500 3.500h11v11h-11z" fill="#f4f4f4" /><path d="M1.500 1.500h4v4h-4z" stroke="#b04a3a" /></> },
  { label: "3D привязка", art: <><path d="M4 5 7 2h8v8l-3 3H4z" fill="#f4f4f4" /><path d="M1.500 11.500h4v3h-4z" stroke="#b04a3a" fill="#fff" /></> },
  { label: "Отслеживание", art: <path d="M13 3 3 12.500h11" /> },
  { label: "ДПСК", art: <><path d="M2.500 2v12H15M3 14 12 5M2 5h3m5 10v-4" /><circle cx="12" cy="4" r="2.500" fill="#f2a33a" stroke="#c76d12" /></> },
  { label: "Динамический ввод", on: true, art: <><path d="M1 7.500h8M5.500 3v9" strokeWidth="2" /><path d="M8.500 8.500h6v4h-6z" fill="#fff" /></> },
  { label: "Вес линий", art: <><path d="M8.500 2v12" /><path d="M2 7.500h6" /><path d="M8 7.500h6" strokeWidth="3" /></> },
  { label: "Прозрачность", on: true, art: <><path d="M1.500 1.500h13v13h-13z" fill="#b5dcf5" stroke="#3b7cab" /><path d="M2 4.500h12M2 7.500h12m-12 3h12m-12 3h12" stroke="#5d9cca" strokeDasharray="2 2" /></> },
  { label: "Быстрые свойства", art: <><path d="M4.500 3.500h7v10h-7z" fill="#eee" /><path d="M6 6.500h4M6 8.500h4M6 10.500h4" /></> },
  { label: "Циклический выбор", art: <><path d="M1 5h8M5 1v8" stroke="#555" /><path d="M6.500 6.500h8v8h-8z" fill="#75b567" stroke="#316a2a" /></> },
];

function StatusCell({ label, on, className, children }: { label: string; on?: boolean; className?: string; children: ReactNode }) {
  return (
    <button
      aria-label={label}
      className={clsx(
        "flex items-center justify-center border-l border-[#6c6c6c] text-[#222]",
        on ? "bg-gradient-to-b from-[#d8edf5] to-[#8cc4da]" : "bg-gradient-to-b from-[#bcbcbc] to-[#9a9a9a]",
        className,
      )}
    >
      {children}
    </button>
  );
}

function StatusBar() {
  return (
    <footer className="flex h-[22px] border-t border-[#333] bg-gradient-to-b from-[#8f8f8f] to-[#6e6e6e] font-['Liberation_Sans',Arial,sans-serif] text-[11px] text-[#1d1d1d]">
      <output className="flex w-[128px] shrink-0 items-center bg-gradient-to-b from-[#989898] to-[#868686] pl-3">8.19, 7.36 , 0.00</output>
      <div className="flex w-[289px] shrink-0">
        {MODES.map((mode) => (
          <StatusCell key={mode.label} label={mode.label} on={mode.on} className="flex-1">
            <Drawing>{mode.art}</Drawing>
          </StatusCell>
        ))}
      </div>
      <div className="ml-auto flex shrink-0 border-r border-[#444]">
        <StatusCell label="МОДЕЛЬ" className="w-[51px]">МОДЕЛЬ</StatusCell>
        <StatusCell label="Лист" className="w-[21px]"><Drawing><path d="M2.500 2.500h10v9h-10z" fill="#f4f4f4" /><path d="m5 4 5 5V4z" fill="#555" stroke="none" /><path d="M0 14h15" /></Drawing></StatusCell>
        <StatusCell label="Просмотр листов" className="w-[21px]"><Drawing><path d="M1.500 2.500h6v6h-6zm7 0h6v6h-6z" fill="#eee" /><path d="M1.500 11h13v2h-13z" fill="#777" /></Drawing></StatusCell>
        <span className="w-[11px] bg-[#7d7d7d]" />
        <StatusCell label="Масштаб аннотаций" className="w-[48px] gap-[3px]">
          <Drawing><path d="M8 2v4l-6 8 6-3 6 3-6-8" fill="#eee" stroke="#333" /></Drawing>1:1<Caret />
        </StatusCell>
        <StatusCell label="Видимость аннотаций" className="w-[21px]"><Drawing><path d="M7 2v4l-5 8 5-3 5 3-5-8" fill="#eee" stroke="#444" /><circle cx="12" cy="10" r="2.500" fill="#f5c33b" stroke="#c98b12" /></Drawing></StatusCell>
        <StatusCell label="Автомасштаб" className="w-[21px]"><Drawing><path d="M8 3v4l-5 7 5-3 6 3-6-7M2 4l4 3" fill="#bbb" stroke="#888" /></Drawing></StatusCell>
        <span className="w-[5px] bg-[#7d7d7d]" />
        <StatusCell label="Рабочее пространство" className="w-[21px]"><Drawing><circle cx="8" cy="8" r="6.500" strokeWidth="2" strokeDasharray="2.500 2.600" /><circle cx="8" cy="8" r="5.500" fill="#eee" /><circle cx="8" cy="8" r="2" /></Drawing></StatusCell>
        <StatusCell label="Блокировка" className="w-[21px]"><Drawing><path d="M9.500 7V4q0-2 2.500-2t2.500 2v3" /><path d="M2.500 7.500h8v6h-8z" fill="#eee" /><path d="M6.500 9v3" /></Drawing></StatusCell>
        <StatusCell label="Ускорение" className="w-[21px]"><Drawing><path d="M1.500 4.500h12v5h-12zM3 10v2m3-2v2m3-2v2M3 4V2m3 2V2m3 2V2" fill="#8ea4bd" stroke="#4d6584" /><circle cx="13" cy="11" r="2" fill="#cfe4ff" stroke="#5a82b8" /></Drawing></StatusCell>
        <div className="my-px flex w-[49px] items-center gap-[3px] border border-[#444] bg-[#858585] pl-[3px]">
          <Drawing><path d="M3 2h8v5H3z" fill="#3f77b5" stroke="#234d7d" /><path d="M1 8h9v5H1z" fill="#f0d24a" stroke="#a5861c" /><path d="m7 10 3 3 5-6" stroke="#37a02f" strokeWidth="2" /></Drawing>
          <Drawing><path d="M6 10Q3 8 4 5t4-3 4 3-2 5z" fill="#ffe9a3" stroke="#d0a44a" /><path d="M6.500 11.500h3v3h-3z" fill="#ddd" stroke="#888" /></Drawing>
        </div>
        <StatusCell label="Меню строки состояния" className="w-[12px]"><SmallCaret /></StatusCell>
        <StatusCell label="Очистить экран" className="w-[18px]"><Drawing w={14} h={14}><path d="M1.500 1.500h11v11h-11z" fill="#fff" /><path d="M1 2.500h12" strokeWidth="2" /></Drawing></StatusCell>
      </div>
    </footer>
  );
}

export default function App() {
  return (
    <div className="relative min-h-screen overflow-hidden bg-black pt-[17px] font-['Open_Sans','Noto_Sans',sans-serif]">
      <Header />
      <Ribbon />
      <DrawingArea />
      <LayoutTabs />
      <CommandLine />
      <StatusBar />
      <LayerPalette />
      <LinetypeDialog />
      <Drawing w={12} h={19} className="absolute left-[564px] top-[481px]">
        <path d="M.5.5v15l3.500-3 2.500 5.500 2-1L6 11.500h5z" fill="#fff" stroke="#222" />
      </Drawing>
    </div>
  );
}
